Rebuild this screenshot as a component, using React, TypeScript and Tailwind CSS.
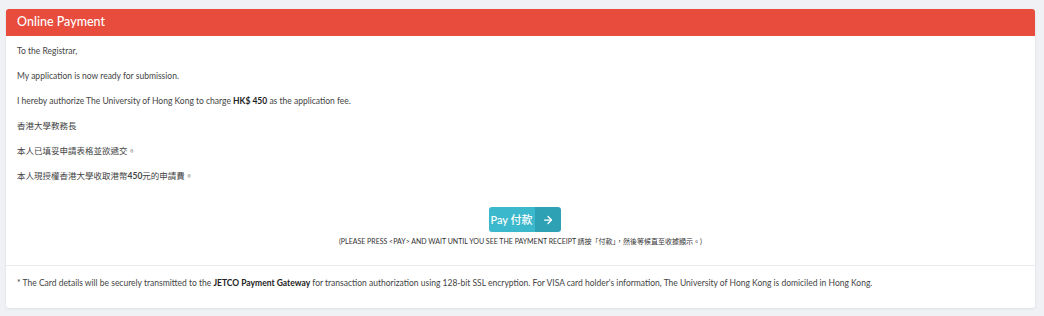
import { ArrowRight } from 'lucide-react';

const FONT = { fontFamily: 'Lato, "Noto Sans CJK TC", sans-serif' };

export default function App() {
  return (
    <div className="min-h-[316px] w-[1044px] bg-[#f0f1f4] pt-[9px] pl-[6px] pr-[9px] text-[#333]" style={FONT}>
      <div className="bg-white rounded-[3px] shadow-[0_1px_3px_rgba(0,0,0,0.08)] overflow-hidden">
        <div className="h-[27px] bg-[#e74c3c] flex items-center px-[11px]">
          <h2 className="text-[12.5px] font-medium text-white leading-none">Online Payment</h2>
        </div>

        <div className="px-[11px] pt-[3px] text-[8.5px] leading-[25px] text-[#444]">
          <p>To the Registrar,</p>
          <p>My application is now ready for submission.</p>
          <p>
            I hereby authorize The University of Hong Kong to charge <b className="font-bold text-[#222]">HK$ 450</b> as the application fee.
          </p>
          <p>香港大學教務長</p>
          <p>本人已填妥申請表格並欲遞交。</p>
          <p>本人現授權香港大學收取港幣<b className="font-bold">450</b>元的申請費。</p>

          <div className="flex flex-col items-center pt-[18px] pb-[19px]">
            <button className="ml-[8px] flex h-[25px] rounded-[3px] overflow-hidden text-white text-[11px]">
              <span className="bg-[#3bb8cb] w-[46px] flex items-center justify-center font-medium whitespace-nowrap">Pay 付款</span>
              <span className="bg-[#2ea2b4] w-[26px] flex items-center justify-center">
                <ArrowRight className="h-[12px] w-[12px]" strokeWidth={2.5} />
              </span>
            </button>
            <p className="text-[7px] leading-[10px] mt-[4px] text-[#333]">
              (PLEASE PRESS &lt;PAY&gt; AND WAIT UNTIL YOU SEE THE PAYMENT RECEIPT 請按「付款」，然後等候直至收據顯示。)
            </p>
          </div>
        </div>

        <div className="border-t border-[#e9ecef] px-[11px] pt-[10px] pb-[18px] text-[8.5px] leading-[14px] text-[#444]">
          * The Card details will be securely transmitted to the <b className="font-bold text-[#222]">JETCO Payment Gateway</b> for transaction authorization using 128-bit SSL encryption. For VISA card holder's information, The University of Hong Kong is domiciled in Hong Kong.
        </div>
      </div>
    </div>
  );
}
